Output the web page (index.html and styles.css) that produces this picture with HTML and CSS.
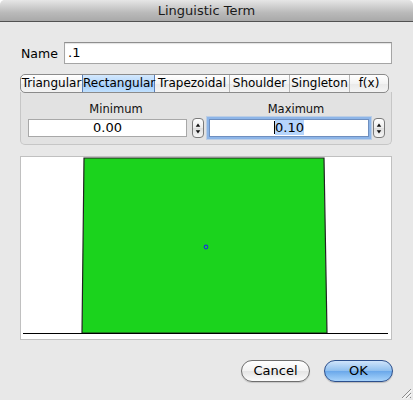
FILE: index.html
```html
<!DOCTYPE html>
<html>
<head>
<meta charset="utf-8">
<link rel="stylesheet" href="styles.css">
</head>
<body>
<div class="window">
  <div class="titlebar">Linguistic Term</div>
  <div class="content">
    <div class="name-row">
      <label class="name-label">Name</label>
      <div class="text-field name-field">.1</div>
    </div>
    <div class="tabs">
      <div class="tab t1">Triangular</div>
      <div class="tab t2 selected">Rectangular</div>
      <div class="tab t3">Trapezoidal</div>
      <div class="tab t4">Shoulder</div>
      <div class="tab t5">Singleton</div>
      <div class="tab t6">f(x)</div>
    </div>
    <div class="panel">
      <div class="group g1">
        <div class="group-label">Minimum</div>
        <div class="group-row">
          <div class="num-field">0.00</div>
          <div class="stepper">
            <svg width="11" height="19" viewBox="0 0 11 19"><path d="M5.5 4 L8 7.5 L3 7.5 Z" fill="#111"/><path d="M3 11.5 L8 11.5 L5.5 15 Z" fill="#111"/></svg>
          </div>
        </div>
      </div>
      <div class="group g2">
        <div class="group-label">Maximum</div>
        <div class="group-row">
          <div class="num-field focused"><span class="caret"></span><span class="sel">0.10</span></div>
          <div class="stepper">
            <svg width="11" height="19" viewBox="0 0 11 19"><path d="M5.5 4 L8 7.5 L3 7.5 Z" fill="#111"/><path d="M3 11.5 L8 11.5 L5.5 15 Z" fill="#111"/></svg>
          </div>
        </div>
      </div>
    </div>
    <div class="graph">
      <svg width="370" height="182" viewBox="0 0 370 182">
        <polygon points="63,1 303,1 306,176 61,176" fill="#1bd31d" stroke="#222" stroke-width="1.2"/>
        <line x1="2" y1="176.5" x2="367" y2="176.5" stroke="#000" stroke-width="1.2"/>
        <circle cx="185" cy="90" r="1.8" fill="none" stroke="#1a3ccf" stroke-width="1.2"/>
      </svg>
    </div>
    <div class="buttons">
      <div class="btn cancel">Cancel</div>
      <div class="btn ok">OK</div>
    </div>
  </div>
  <svg class="grip" width="12" height="12" viewBox="0 0 12 12">
    <path d="M11 2 L2 11 M11 6 L6 11 M11 10 L10 11" stroke="#8a8a8a" stroke-width="1"/>
    <path d="M11.8 2.8 L2.8 11.8 M11.8 6.8 L6.8 11.8" stroke="#fff" stroke-width="1"/>
  </svg>
</div>
</body>
</html>
```

FILE: styles.css
```css
html, body {
  margin: 0;
  padding: 0;
  background: #ffffff;
}
body {
  font-family: "DejaVu Sans", "Liberation Sans", sans-serif;
  font-size: 12px;
  color: #000;
}
.window {
  position: relative;
  width: 413px;
  height: 400px;
  background: #e8e8e8;
  border-radius: 5px 5px 0 0;
  overflow: hidden;
}
.titlebar {
  height: 21px;
  border-bottom: 1px solid #525252;
  background: linear-gradient(#e6e6e6, #bababa 60%, #a9a9a9);
  text-align: center;
  line-height: 22px;
  font-size: 13px;
  color: #1a1a1a;
}
.content {
  display: flex;
  flex-direction: column;
  padding: 0 20px 0 20px;
}
.name-row {
  display: flex;
  align-items: center;
  margin-top: 20px;
  height: 22px;
}
.name-label {
  width: 43px;
  padding-left: 1px;
  font-size: 12.5px;
}
.text-field {
  box-sizing: border-box;
  flex: 1;
  height: 22px;
  margin-right: 1px;
  background: #fff;
  border: 1px solid #a5a5a5;
  border-top-color: #8e8e8e;
  box-shadow: inset 0 1px 1px rgba(0,0,0,0.12);
  padding: 2px 3px;
  font-size: 13px;
  line-height: 16px;
}
.tabs {
  display: flex;
  margin-top: 10px;
  height: 19px;
  width: 369px;
  box-sizing: border-box;
  border: 1px solid #8b8b8b;
  border-radius: 5px;
  background: linear-gradient(#ffffff, #f3f3f3 50%, #e9e9e9 51%, #f4f4f4);
  overflow: hidden;
  position: relative;
  z-index: 1;
}
.tab {
  box-sizing: border-box;
  border-left: 1px solid #b5b5b5;
  line-height: 17px;
  text-align: center;
  white-space: nowrap;
  font-size: 12px;
}
.tab.t1 { width: 61px; border-left: none; }
.tab.t2 { width: 73px; }
.tab.t3 { width: 74px; }
.tab.t4 { width: 60px; }
.tab.t5 { width: 60px; }
.tab.t6 { flex: 1; }
.tab.selected {
  background: linear-gradient(#d3e8fd, #b3d6fb 50%, #9ec9f7 51%, #c1e1ff);
  border-left-color: #5b7fb8;
  border-right: 1px solid #5b7fb8;
}
.tab.selected + .tab { border-left: none; }
.panel {
  box-sizing: border-box;
  height: 53px;
  margin-top: -1px;
  margin-right: 1px;
  border: 1px solid #c6c6c6;
  border-top: none;
  border-radius: 0 0 5px 5px;
  background: #e2e2e2;
  display: flex;
  padding: 10px 0 0 7px;
}
.group {
  display: flex;
  flex-direction: column;
}
.g1 { width: 176px; }
.g2 { width: 178px; margin-left: 3px; }
.group-label {
  text-align: center;
  font-size: 11.5px;
  height: 14px;
  line-height: 14px;
  color: #111;
}
.group-row {
  display: flex;
  margin-top: 2px;
  align-items: flex-start;
}
.num-field {
  box-sizing: border-box;
  height: 18px;
  background: #fff;
  border: 1px solid #a8a8a8;
  text-align: center;
  font-size: 13px;
  line-height: 16px;
}
.g1 .num-field {
  width: 160px;
  margin-top: 1px;
}
.g1 .stepper { margin-left: 5px; }
.g2 .num-field {
  width: 160px;
  margin: 1px 0 0 2px;
  border-color: #6f8fbf;
  box-shadow: 0 0 0 2px #8db5e8, 0 0 0 3px rgba(141,181,232,0.45);
}
.g2 .stepper { margin-left: 4px; }
.caret {
  display: inline-block;
  width: 1px;
  height: 13px;
  background: #000;
  vertical-align: -2px;
}
.sel {
  background: #b6d5fc;
}
.stepper {
  box-sizing: border-box;
  width: 12px;
  height: 20px;
  border: 1px solid #7a7a7a;
  border-radius: 4px;
  background: linear-gradient(#ffffff, #ececec 50%, #dedede 51%, #f6f6f6);
  display: flex;
  align-items: center;
  justify-content: center;
}
.stepper svg { display: block; }
.graph {
  box-sizing: border-box;
  margin-top: 11px;
  width: 372px;
  height: 184px;
  background: #fff;
  border: 1px solid #c0c0c0;
}
.graph svg { display: block; }
.buttons {
  display: flex;
  justify-content: flex-end;
  gap: 14px;
  margin-top: 20px;
  padding-right: 0;
}
.btn {
  box-sizing: border-box;
  width: 69px;
  height: 22px;
  border-radius: 11px;
  text-align: center;
  line-height: 20px;
  font-size: 13px;
}
.cancel {
  border: 1px solid #6e6e6e;
  background: linear-gradient(#ffffff, #f2f2f2 50%, #e4e4e4 51%, #fbfbfb);
  box-shadow: 0 1px 1px rgba(0,0,0,0.15);
}
.ok {
  border: 1px solid #2c4f8c;
  background: linear-gradient(#cfe4fb, #8ebfef 50%, #6aa8ea 51%, #a7d3fb);
  box-shadow: 0 1px 1px rgba(0,0,0,0.2);
}
.grip {
  position: absolute;
  right: 1px;
  bottom: 1px;
}
```
